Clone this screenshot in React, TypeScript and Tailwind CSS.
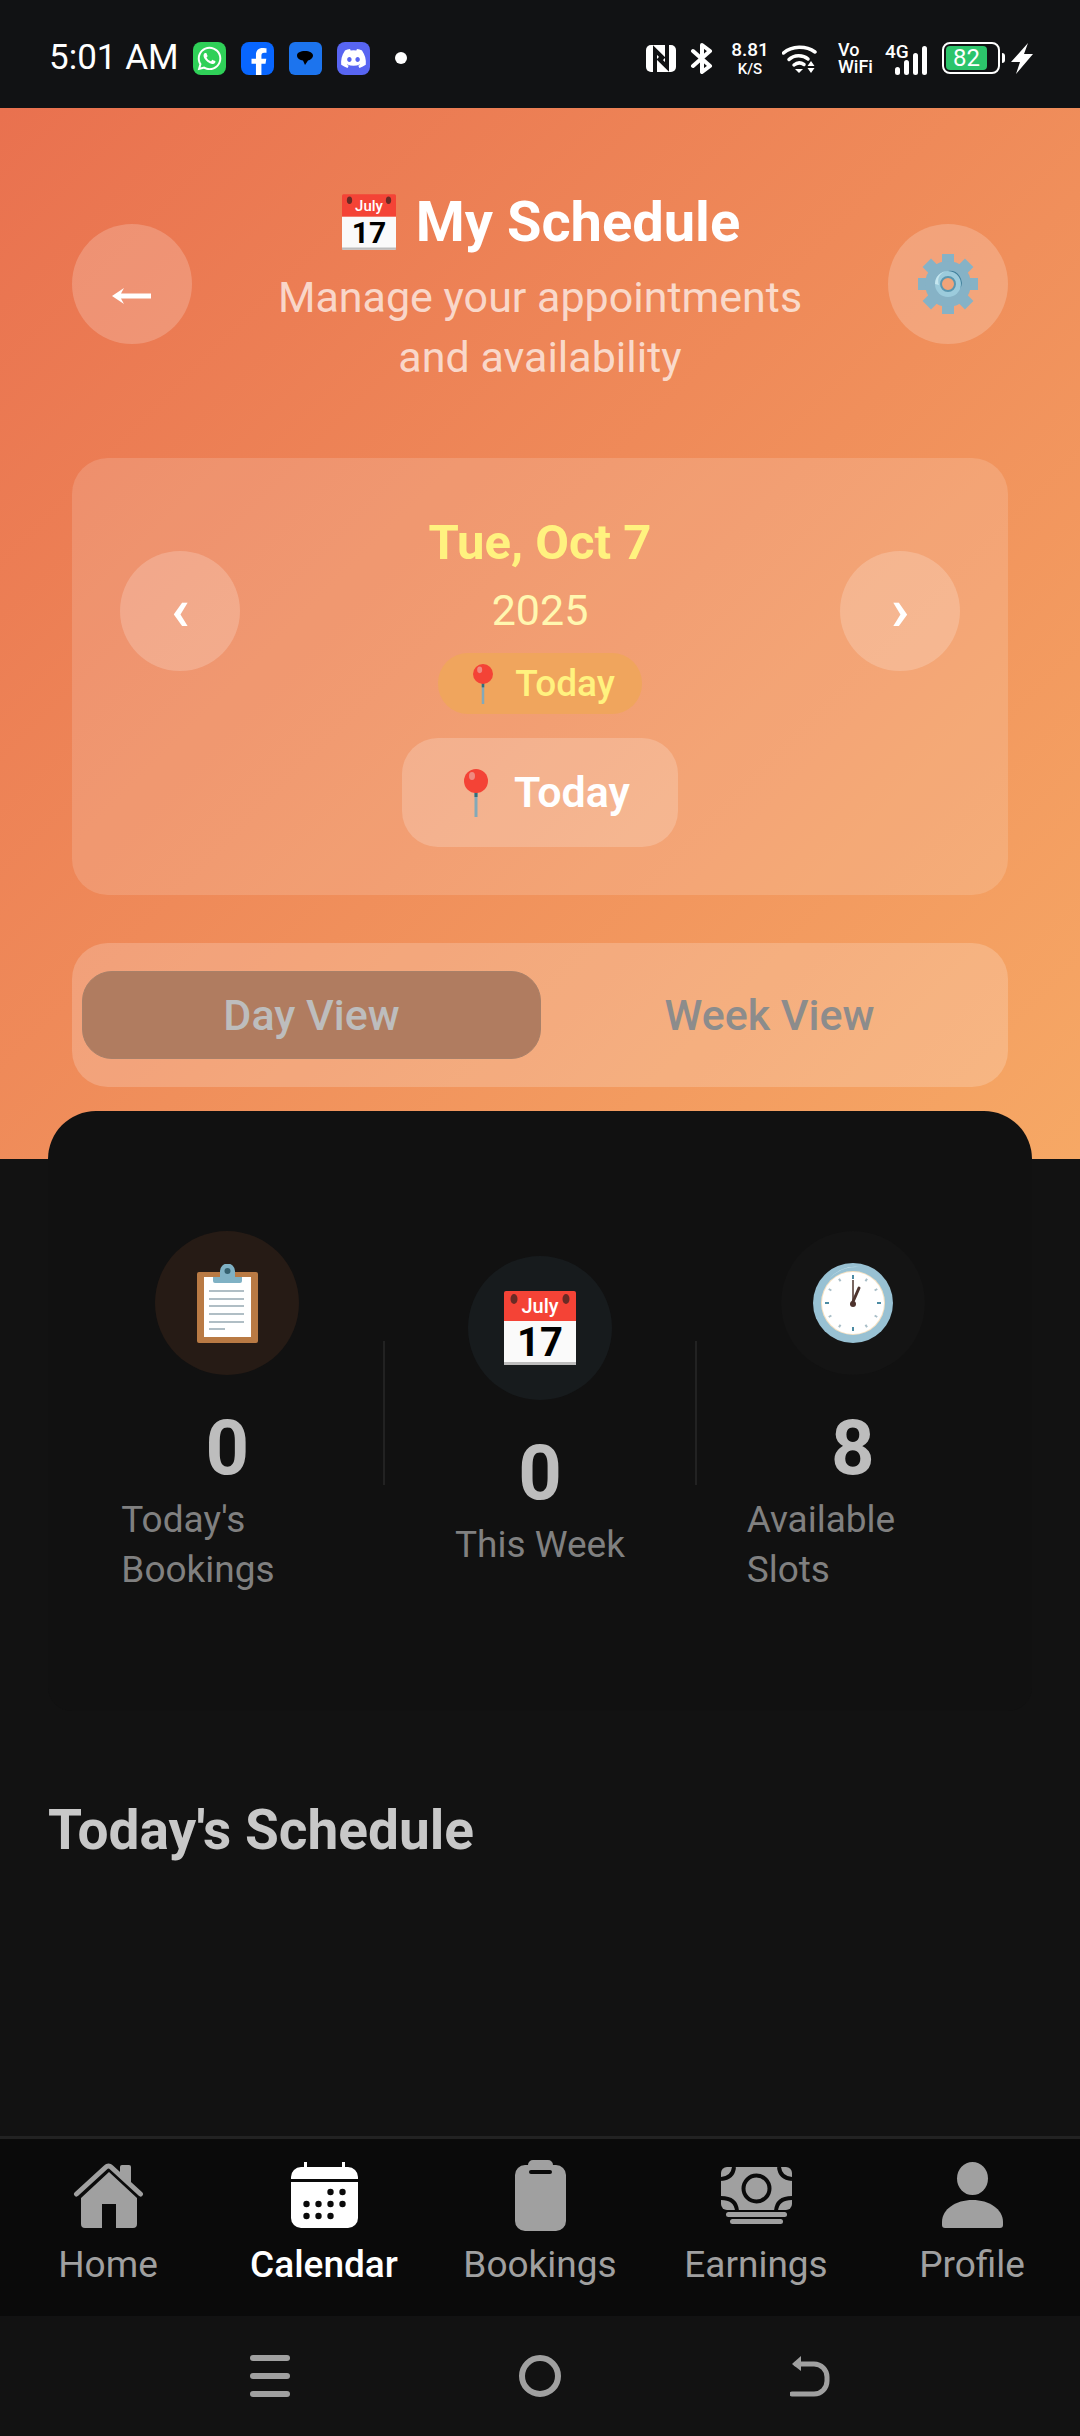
import type { ReactNode } from "react";
import { FaWhatsapp, FaFacebookF, FaDiscord } from "react-icons/fa";

function CalendarEmoji({ className }: { className: string }) {
  return (
    <svg viewBox="0 0 72 74" className={className}>
      <path d="M2 0h68a2 2 0 0 1 2 2v28H0V2a2 2 0 0 1 2-2z" fill="#f44336" />
      <path d="M0 30h72v42a2 2 0 0 1-2 2H2a2 2 0 0 1-2-2z" fill="#fafafa" />
      <rect y="71" width="72" height="3" fill="#bdbdbd" />
      <ellipse cx="10" cy="8" rx="3.5" ry="5" fill="#3b2320" opacity="0.75" />
      <ellipse cx="62" cy="8" rx="3.5" ry="5" fill="#3b2320" opacity="0.75" />
      <text x="36" y="22" textAnchor="middle" fontFamily="Roboto" fontWeight="500" fontSize="20" fill="#fff">July</text>
      <text x="36" y="65" textAnchor="middle" fontFamily="Roboto" fontWeight="700" fontSize="40" fill="#000">17</text>
    </svg>
  );
}

function GearEmoji() {
  return (
    <svg viewBox="0 0 60 60" className="w-[60px] h-[60px]">
      <g fill="#86b2c6">
        {[0, 45, 90, 135, 180, 225, 270, 315].map((r) => (
          <rect key={r} x="24" y="0" width="12" height="14" transform={`rotate(${r} 30 30)`} />
        ))}
        <circle cx="30" cy="30" r="23" />
      </g>
      <circle cx="30" cy="30" r="13" fill="#9ccbdc" />
      <path d="M30 17a13 13 0 0 1 12 18a12 12 0 0 0-12-18z" fill="#3f7f9b" />
      <path d="M17 30a13 13 0 0 1 13-13a10 10 0 0 0-9 14z" fill="#c5e6ef" />
      <circle cx="30" cy="30" r="7" fill="#f0a379" />
      <circle cx="30" cy="30" r="7" fill="none" stroke="#5a97b0" strokeWidth="2" />
    </svg>
  );
}

function PinEmoji({ className }: { className: string }) {
  return (
    <svg viewBox="0 0 24 48" className={className}>
      <rect x="10.5" y="22" width="3" height="26" fill="#84a9b8" />
      <rect x="10.5" y="22" width="3" height="6" fill="#2f6f7e" />
      <circle cx="12" cy="12" r="12" fill="#f44336" />
      <ellipse cx="8" cy="7" rx="3" ry="4" fill="#ef8a80" />
    </svg>
  );
}

function ClipboardEmoji() {
  return (
    <svg viewBox="0 0 61 79" className="w-[61px] h-[79px]">
      <rect y="8" width="61" height="71" rx="2" fill="#b97a44" />
      <rect x="7" y="13" width="47" height="60" fill="#fff" />
      <path d="M23 13v-6a7.500 7.500 0 0 1 15 0v6h7v4a2 2 0 0 1-2 2H18a2 2 0 0 1-2-2v-4z" fill="#7fb1c4" />
      <circle cx="30.500" cy="7" r="3" fill="#35616f" />
      {[26, 34, 41, 49, 57].map((y) => (
        <rect key={y} x="12" y={y} width="35" height="2" fill="#b0bec5" />
      ))}
      <rect x="12" y="64" width="16" height="2" fill="#b0bec5" />
    </svg>
  );
}

function ClockEmoji() {
  const ticks = [0, 30, 60, 90, 120, 150, 180, 210, 240, 270, 300, 330];
  return (
    <svg viewBox="0 0 80 80" className="w-[80px] h-[80px]">
      <circle cx="40" cy="40" r="40" fill="#98c1d3" />
      <path d="M16 16a34 34 0 0 1 30-12a38 38 0 0 0-30 12z" fill="#d7edf4" />
      <circle cx="40" cy="40" r="32" fill="#f6e2c3" />
      <circle cx="40" cy="40" r="31" fill="#fff" />
      {ticks.map((r) => (
        <rect key={r} x="39" y="12" width="2" height={r % 90 === 0 ? 4 : 3} fill={r % 90 === 0 ? "#4c8ba3" : "#a9bec7"} transform={`rotate(${r} 40 40)`} />
      ))}
      <path d="M40 17v25" stroke="#4e342e" strokeWidth="1.500" />
      <path d="M39 41l7-16" stroke="#4e342e" strokeWidth="3" strokeLinecap="round" />
      <circle cx="40" cy="41" r="3" fill="#4e342e" />
    </svg>
  );
}

function HomeIcon() {
  return (
    <svg viewBox="0 0 71 66" className="w-[71px] h-[66px]" fill="#a0a0a0">
      <path d="M36 10L64 36V62a4 4 0 0 1-4 4H43V42H29V66H12a4 4 0 0 1-4-4V36z" />
      <path d="M3.500 32L33 5a3.500 3.500 0 0 1 5 0L67.500 32" fill="none" stroke="#a0a0a0" strokeWidth="5" strokeLinecap="round" />
      <path d="M47 13V5a2 2 0 0 1 2-2h7a2 2 0 0 1 2 2V23z" />
    </svg>
  );
}

function CalendarNavIcon() {
  const dots = [
    [38, 30], [50, 30],
    [14, 42], [26, 42], [38, 42], [50, 42],
    [14, 54], [26, 54], [38, 54],
  ];
  return (
    <svg viewBox="0 0 67 66" className="w-[67px] h-[66px]" fill="#fff">
      <path d="M10 5h3V0h3v5h35V0h3v5h3a10 10 0 0 1 10 10v2H0v-2A10 10 0 0 1 10 5z" />
      <path d="M0 20h67v36a10 10 0 0 1-10 10H10A10 10 0 0 1 0 56z" />
      {dots.map(([x, y]) => (
        <circle key={`${x}-${y}`} cx={x + 1.500} cy={y} r="3.200" fill="#0a0a0a" />
      ))}
    </svg>
  );
}

function BookingsIcon() {
  return (
    <svg viewBox="0 0 51 71" className="w-[51px] h-[71px]" fill="#a0a0a0">
      <path fillRule="evenodd" d="M18 0h15a5 5 0 0 1 5 5h3a10 10 0 0 1 10 10v46a10 10 0 0 1-10 10H10A10 10 0 0 1 0 61V15A10 10 0 0 1 10 5h3a5 5 0 0 1 5-5zM16 10a2 2 0 0 0 0 4h19a2 2 0 0 0 0-4z" />
    </svg>
  );
}

function EarningsIcon() {
  return (
    <svg viewBox="0 0 71 57" className="w-[71px] h-[57px]" fill="#a0a0a0">
      <rect width="71" height="43" rx="6" />
      <g fill="none" stroke="#0a0a0a" strokeWidth="4">
        <circle cx="35.500" cy="21.500" r="13" />
        <path d="M0 12Q12 11 13 0" />
        <path d="M71 12Q59 11 58 0" />
        <path d="M0 31Q15 31 16 44" />
        <path d="M71 31Q56 31 55 44" />
      </g>
      <rect x="5" y="45" width="61" height="5" rx="2.500" />
      <rect x="9" y="52" width="53" height="5" rx="2.500" />
    </svg>
  );
}

function ProfileIcon() {
  return (
    <svg viewBox="0 0 61 66" className="w-[61px] h-[66px]" fill="#a0a0a0">
      <ellipse cx="30.500" cy="16.500" rx="15.500" ry="16.500" />
      <path d="M30.500 38C47 38 61 47 61 60v3a3 3 0 0 1-3 3H3a3 3 0 0 1-3-3v-3C0 47 14 38 30.500 38z" />
    </svg>
  );
}

function NfcIcon() {
  return (
    <svg viewBox="0 0 30 27" className="w-[30px] h-[27px]">
      <rect width="30" height="27" rx="5" fill="#fff" />
      <path d="M9 27V5l9 9M21 0v22l-9-9" fill="none" stroke="#111214" strokeWidth="4" />
    </svg>
  );
}

function BluetoothIcon() {
  return (
    <svg viewBox="0 0 24 31" className="w-[24px] h-[31px]" fill="none" stroke="#fff" strokeWidth="4" strokeLinecap="round" strokeLinejoin="round">
      <path d="M3 8L20 23L12 29V2L20 8L3 23" />
    </svg>
  );
}

function WifiIcon() {
  return (
    <svg viewBox="0 0 36 29" className="w-[36px] h-[29px]" fill="none" stroke="#fff" strokeWidth="3.500">
      <path d="M1.500 9C10 1.500 24 1.500 33 8" strokeLinecap="round" />
      <path d="M7 15.500c5-5 14-5 19-.5" strokeLinecap="round" />
      <path d="M12 21c3-2.500 7-2.500 10-.5" strokeLinecap="round" />
      <path d="M13 25h8l-4 4z" fill="#fff" stroke="none" />
      <path d="M29 17l3.500 5h-7z M25.500 24h7L29 29z" fill="#fff" stroke="none" />
    </svg>
  );
}

function SignalIcon() {
  return (
    <div className="flex items-end gap-[4px] h-[29px]">
      <span className="w-[5px] h-[8px] rounded-full bg-white" />
      <span className="w-[5px] h-[15px] rounded-full bg-white" />
      <span className="w-[5px] h-[22px] rounded-full bg-white" />
      <span className="w-[5px] h-[29px] rounded-full bg-white" />
    </div>
  );
}

function StatusBar() {
  return (
    <div className="h-[108px] bg-[#111214] flex items-center pl-[49px] pr-[47px] pt-[8px] text-white">
      <span className="text-[35px] leading-none mt-[-1px]">5:01 AM</span>
      <div className="flex items-center gap-[15px] ml-[14px]">
        <div className="w-[33px] h-[33px] rounded-[8px] bg-[#2fd058] flex items-center justify-center">
          <FaWhatsapp className="w-[27px] h-[27px] text-white" />
        </div>
        <div className="w-[33px] h-[33px] rounded-[8px] bg-[#0866ff] flex items-end justify-center overflow-hidden">
          <FaFacebookF className="w-[26px] h-[28px] text-white mb-[-1px] ml-[3px]" />
        </div>
        <div className="w-[33px] h-[33px] rounded-[6px] bg-[#1c74ee] flex items-center justify-center">
          <svg viewBox="0 0 16 14" className="w-[16px] h-[14px]">
            <path d="M8 0c4.500 0 8 1.800 8 4.500S13 9 11 9.500L8 14 6 9.500C3 9 0 7.500 0 4.500S3.500 0 8 0z" fill="#000" />
          </svg>
        </div>
        <div className="w-[33px] h-[33px] rounded-[8px] bg-[#5865f2] flex items-center justify-center">
          <FaDiscord className="w-[27px] h-[27px] text-white" />
        </div>
      </div>
      <span className="w-[12px] h-[12px] rounded-full bg-white ml-[25px]" />

      <div className="flex items-center ml-auto">
        <NfcIcon />
        <div className="ml-[14px]">
          <BluetoothIcon />
        </div>
        <div className="flex flex-col items-center ml-[16px] w-[40px] font-medium leading-none">
          <span className="text-[19px]">8.81</span>
          <span className="text-[15px] mt-[3px]">K/S</span>
        </div>
        <div className="ml-[12px]">
          <WifiIcon />
        </div>
        <div className="flex flex-col ml-[20px] w-[37px] font-medium">
          <span className="text-[18px] leading-[17px]">Vo</span>
          <span className="text-[18px] leading-[17px]">WiFi</span>
        </div>
        <div className="flex flex-col ml-[10px] w-[42px] h-[33px]">
          <span className="text-[19px] font-medium leading-none h-0">4G</span>
          <div className="mt-[4px] pl-[10px]">
            <SignalIcon />
          </div>
        </div>
        <div className="w-[58px] h-[32px] rounded-[8px] border-2 border-white ml-[15px] p-[2px] flex">
          <div className="w-[41px] rounded-[4px] bg-[#2cc46b] text-[24px] leading-[24px] text-center">82</div>
        </div>
        <span className="w-[3px] h-[10px] bg-white rounded-r-sm ml-[2px]" />
        <svg viewBox="0 0 22 31" className="w-[22px] h-[31px] ml-[6px]" fill="#fff">
          <path d="M17 0L0 19H9L5 31L22 11H13z" />
        </svg>
      </div>
    </div>
  );
}

function Header() {
  return (
    <div className="h-[1051px] bg-[linear-gradient(135deg,#e9714f_0%,#f6a865_100%)] px-[72px] pt-[73px]">
      <div className="flex items-center justify-between">
        <button className="w-[120px] h-[120px] rounded-full bg-white/20 flex items-center justify-center pt-[24px]">
          <svg viewBox="0 0 40 16" className="w-[40px] h-[16px]" fill="#fff">
            <path d="M0 8L12 0l-3 5.500H39v5H9L12 16z" />
          </svg>
        </button>
        <div className="flex flex-col items-center">
          <div className="flex items-center gap-[20px] h-[86px] pb-[4px] pl-[2px]">
            <CalendarEmoji className="w-[54px] h-[56px]" />
            <h1 className="text-[56px] font-bold leading-[64px] text-white">My Schedule</h1>
          </div>
          <p className="text-[43px] leading-[60px] text-white/70 text-center w-[560px]">
            Manage your appointments and availability
          </p>
        </div>
        <button className="w-[120px] h-[120px] rounded-full bg-white/20 flex items-center justify-center">
          <GearEmoji />
        </button>
      </div>

      <div className="mt-[71px] h-[437px] rounded-[36px] bg-white/15 px-[48px] pt-[56px] flex flex-col items-center">
        <div className="w-full flex items-start justify-between">
          <button className="w-[120px] h-[120px] mt-[37px] rounded-full bg-white/20 flex items-center justify-center text-white text-[60px] font-bold leading-none pb-[2px]">
            ‹
          </button>
          <div className="flex flex-col items-center">
            <p className="text-[49px] font-bold leading-[60px] text-[#fff27f] mt-[-1px]">Tue, Oct 7</p>
            <p className="text-[43px] leading-[56px] text-[#fff7b0] mt-[9px]">2025</p>
            <div className="mt-[15px] h-[61px] w-[204px] rounded-[30px] bg-[#f0a55d] flex items-center justify-center gap-[22px] pl-[8px]">
              <PinEmoji className="w-[20px] h-[40px]" />
              <span className="text-[37px] font-medium text-[#fff27f]">Today</span>
            </div>
          </div>
          <button className="w-[120px] h-[120px] mt-[37px] rounded-full bg-white/20 flex items-center justify-center text-white text-[60px] font-bold leading-none pb-[2px]">
            ›
          </button>
        </div>
        <button className="mt-[24px] w-[276px] h-[109px] rounded-[36px] bg-white/20 flex items-center justify-center gap-[26px] pl-[14px]">
          <PinEmoji className="w-[24px] h-[48px]" />
          <span className="text-[43px] font-semibold text-white">Today</span>
        </button>
      </div>

      <div className="mt-[48px] h-[144px] rounded-[36px] bg-white/20 p-[10px] flex items-center">
        <div className="flex-1 h-[88px] rounded-[30px] bg-[#b07c60] border border-[#a98068] flex items-center justify-center">
          <span className="text-[43px] font-medium text-[#bdbdbd]">Day View</span>
        </div>
        <div className="flex-1 h-[88px] flex items-center justify-center">
          <span className="text-[43px] font-medium text-[#8c8c8c]">Week View</span>
        </div>
      </div>
    </div>
  );
}

function StatItem({ number, lines, icon, circle, shift }: { number: string; lines: string[]; icon: ReactNode; circle: string; shift: boolean }) {
  return (
    <div className={`flex-1 flex flex-col items-center ${shift ? "pt-[25px]" : ""}`}>
      <div className={`w-[144px] h-[144px] rounded-full flex items-center justify-center ${circle}`}>{icon}</div>
      <p className="text-[76px] font-bold leading-[84px] text-[#bdbdbd] mt-[31px]">{number}</p>
      <div className="text-[37px] leading-[50px] text-[#808080] mt-[5px] min-w-[212px]">
        {lines.map((l) => (
          <p key={l} className={lines.length === 1 ? "text-center" : ""}>{l}</p>
        ))}
      </div>
    </div>
  );
}

function Stats() {
  return (
    <div className="mx-[48px] -mt-[48px] h-[600px] rounded-t-[48px] rounded-b-[24px] bg-[#111111] px-[24px] pt-[120px] flex items-start relative">
      <StatItem number="0" lines={["Today's", "Bookings"]} icon={<ClipboardEmoji />} circle="bg-[#261b15]" shift={false} />
      <div className="w-[2px] h-[144px] mt-[110px] bg-[#222222]" />
      <StatItem number="0" lines={["This Week"]} icon={<CalendarEmoji className="w-[72px] h-[74px]" />} circle="bg-[#171b1d]" shift />
      <div className="w-[2px] h-[144px] mt-[110px] bg-[#222222]" />
      <StatItem number="8" lines={["Available", "Slots"]} icon={<ClockEmoji />} circle="bg-[#141414]" shift={false} />
    </div>
  );
}

const navItems = [
  { label: "Home", icon: <HomeIcon />, active: false },
  { label: "Calendar", icon: <CalendarNavIcon />, active: true },
  { label: "Bookings", icon: <BookingsIcon />, active: false },
  { label: "Earnings", icon: <EarningsIcon />, active: false },
  { label: "Profile", icon: <ProfileIcon />, active: false },
];

function BottomNav() {
  return (
    <div className="h-[180px] bg-[#0a0a0a] border-t-[3px] border-[#222222] flex">
      {navItems.map((item) => (
        <div key={item.label} className="flex-1 flex flex-col items-center pt-[20px]">
          <div className="h-[72px] flex items-center justify-center">{item.icon}</div>
          <span className={`text-[37px] leading-[44px] mt-[12px] ${item.active ? "text-white font-medium" : "text-[#a0a0a0]"}`}>
            {item.label}
          </span>
        </div>
      ))}
    </div>
  );
}

function SystemNav() {
  return (
    <div className="h-[120px] bg-[#121212] flex items-center justify-center gap-[229px]">
      <div className="w-[40px] h-[42px] flex flex-col justify-between">
        <span className="h-[6px] rounded-sm bg-[#a0a0a0]" />
        <span className="h-[6px] rounded-sm bg-[#a0a0a0]" />
        <span className="h-[6px] rounded-sm bg-[#a0a0a0]" />
      </div>
      <div className="w-[42px] h-[42px] rounded-full border-[6px] border-[#a0a0a0]" />
      <svg viewBox="0 0 40 42" className="w-[40px] h-[42px]" fill="none" stroke="#a0a0a0" strokeWidth="5">
        <path d="M2 39h22a13 13 0 0 0 13-13v-4a13 13 0 0 0-13-13H6" strokeLinecap="round" />
        <path d="M11 1L2 9l9 7z" fill="#a0a0a0" stroke="none" />
      </svg>
    </div>
  );
}

export default function App() {
  return (
    <div className="w-[1080px] h-[2436px] flex flex-col bg-[#121212] font-['Roboto',sans-serif] overflow-hidden">
      <StatusBar />
      <div className="flex-1">
        <Header />
        <Stats />
        <h2 className="text-[55px] font-bold leading-[64px] text-[#c8c8c8] ml-[48px] mt-[87px]">Today's Schedule</h2>
      </div>
      <BottomNav />
      <SystemNav />
    </div>
  );
}
